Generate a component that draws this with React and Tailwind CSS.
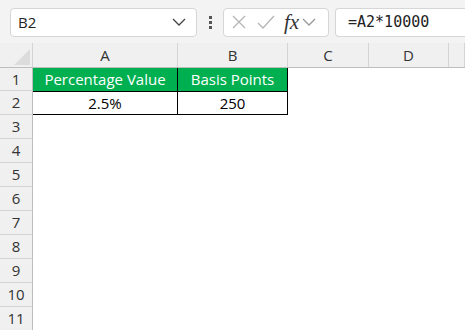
import React from 'react';

const cols = [
  { name: 'A', w: 'w-[145px]' },
  { name: 'B', w: 'w-[110px]' },
  { name: 'C', w: 'w-[81px]' },
  { name: 'D', w: 'w-[80px]' },
  { name: '', w: 'flex-1' },
];

function Chevron({ color = '#444' }) {
  return (
    <svg width="14" height="8" viewBox="0 0 14 8" fill="none" stroke={color} strokeWidth="1.3">
      <path d="M1 1l6 6 6-6" />
    </svg>
  );
}

export default function App() {
  const rows = [3, 4, 5, 6, 7, 8, 9, 10, 11];
  return (
    <div className="w-[465px] h-[330px] overflow-hidden bg-white" style={{ fontFamily: '"Open Sans", sans-serif' }}>
      {/* Formula bar */}
      <div className="h-[43px] bg-[#f3f3f3] flex items-center pt-[1px]">
        <div className="ml-[10px] w-[187px] h-[29px] bg-white border border-[#d6d6d6] rounded-[4px] flex items-center justify-between pl-[7px] pr-[10px]">
          <span className="text-[15px] text-[#222]">B2</span>
          <Chevron />
        </div>
        <div className="w-[26px] flex flex-col items-center gap-[2px]">
          <div className="w-[3px] h-[3px] bg-[#555]" />
          <div className="w-[3px] h-[3px] bg-[#555]" />
          <div className="w-[3px] h-[3px] bg-[#555]" />
        </div>
        <div className="w-[106px] h-[29px] bg-white border border-[#d6d6d6] rounded-[4px] flex items-center pl-[7px]">
          <svg width="16" height="16" viewBox="0 0 16 16" stroke="#b5b5b5" strokeWidth="1.3">
            <path d="M2 2l12 12M14 2L2 14" />
          </svg>
          <svg className="ml-[10px]" width="18" height="16" viewBox="0 0 18 16" fill="none" stroke="#b5b5b5" strokeWidth="1.3">
            <path d="M1 9l5 5L17 2" />
          </svg>
          <span className="ml-[9px] text-[21px] italic text-[#333] leading-none" style={{ fontFamily: '"Liberation Serif", serif' }}>fx</span>
          <span className="ml-[3px] flex items-center"><Chevron color="#999" /></span>
        </div>
        <div className="ml-[6px] flex-1 h-[29px] bg-white border border-[#d6d6d6] border-r-0 rounded-l-[4px] flex items-center pl-[12px]">
          <span className="text-[15px] text-[#222]" style={{ fontFamily: '"DejaVu Sans Mono", monospace' }}>=A2*10000</span>
        </div>
      </div>

      {/* Column headers */}
      <div className="flex h-[25px] bg-[#f0f0f0] border-b border-[#bdbdbd] text-[15px] text-[#333]">
        <div className="w-[33px] border-r border-[#d4d4d4] flex items-end justify-end pr-[2px] pb-[2px]">
          <svg width="16" height="16" viewBox="0 0 16 16"><path d="M16 0V16H0Z" fill="#dcdcdc" /></svg>
        </div>
        {cols.map((c, i) => (
          <div key={i} className={`${c.w} border-r border-[#d4d4d4] flex items-center justify-center`}>{c.name}</div>
        ))}
      </div>

      {/* Row 1 */}
      <div className="flex h-[23px] text-[15px]">
        <div className="w-[33px] bg-[#f0f0f0] border-r border-[#bdbdbd] border-b border-b-[#d4d4d4] flex items-center justify-center text-[#333]">1</div>
        <div className="w-[145px] bg-[#00b050] text-white flex items-center justify-center border-r border-black">Percentage Value</div>
        <div className="w-[110px] bg-[#00b050] text-white flex items-center justify-center border-r border-black">Basis Points</div>
      </div>

      {/* Row 2 */}
      <div className="flex h-[24px] text-[15px]">
        <div className="w-[33px] bg-[#f0f0f0] border-r border-[#bdbdbd] border-b border-b-[#d4d4d4] flex items-center justify-center text-[#333]">2</div>
        <div className="w-[145px] border-t border-b border-r border-black flex items-center justify-center text-black">2.5%</div>
        <div className="w-[110px] border-t border-b border-r border-black flex items-center justify-center text-black">250</div>
      </div>

      {rows.map(r => (
        <div key={r} className="flex h-[24px] text-[15px]">
          <div className="w-[33px] bg-[#f0f0f0] border-r border-[#bdbdbd] border-b border-b-[#d4d4d4] flex items-center justify-center text-[#333]">{r}</div>
        </div>
      ))}
    </div>
  );
}
